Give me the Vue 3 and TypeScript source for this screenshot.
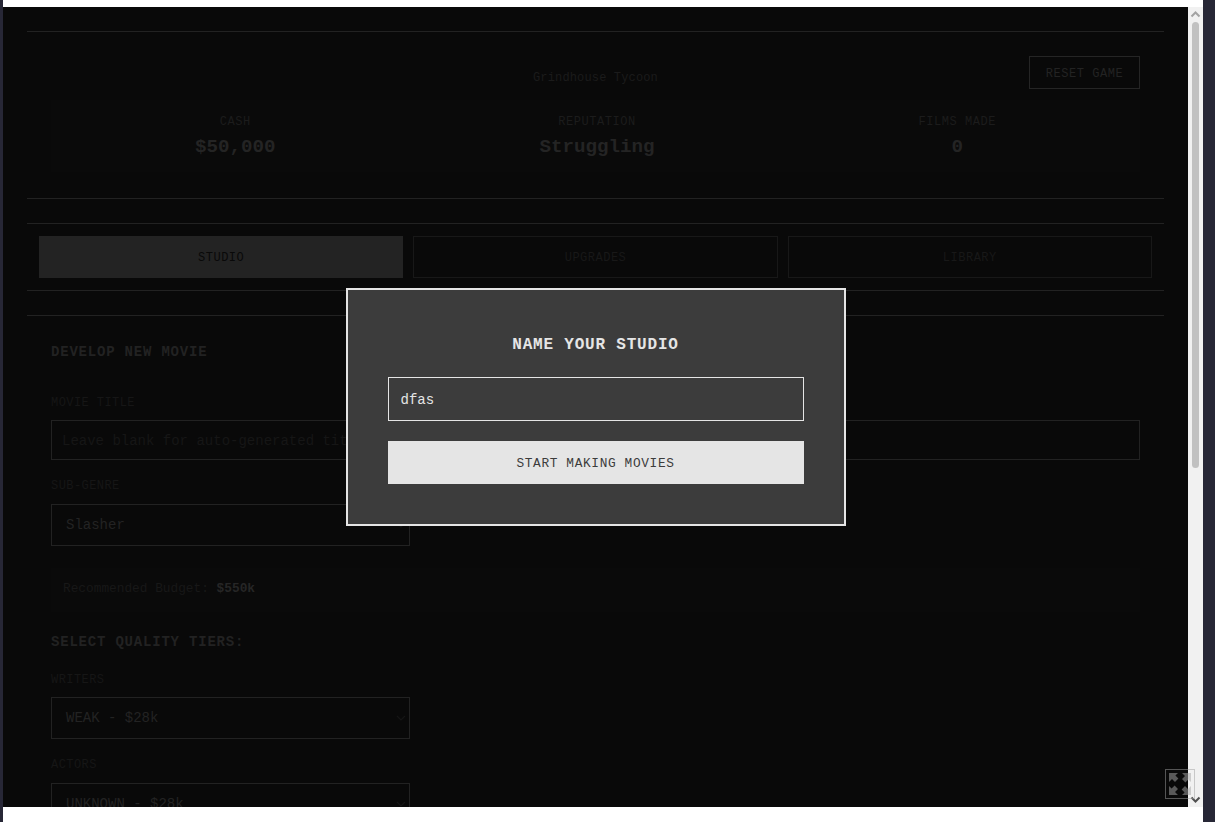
<script setup lang="ts">
import { ref } from 'vue'

const stats = [
  { label: 'CASH', value: '$50,000' },
  { label: 'REPUTATION', value: 'Struggling' },
  { label: 'FILMS MADE', value: '0' },
]
const tabs = ['STUDIO', 'UPGRADES', 'LIBRARY']
const studioName = ref('dfas')
</script>

<template>
  <div class="page">
    <div class="sheet">
      <div class="viewport">
        <div class="scroller">
          <div class="game">
            <header class="band head-band">
              <div class="head-top">
                <span class="game-title">Grindhouse Tycoon</span>
                <button class="reset">RESET GAME</button>
              </div>
              <div class="stats">
                <div v-for="s in stats" :key="s.label" class="stat">
                  <div class="stat-label">{{ s.label }}</div>
                  <div class="stat-value">{{ s.value }}</div>
                </div>
              </div>
            </header>

            <nav class="band tabs">
              <button
                v-for="(t, i) in tabs"
                :key="t"
                class="tab"
                :class="{ active: i === 0 }"
              >{{ t }}</button>
            </nav>

            <section class="band form">
              <h2 class="heading">DEVELOP NEW MOVIE</h2>
              <label class="label first">MOVIE TITLE</label>
              <div class="input">Leave blank for auto-generated titles</div>
              <label class="label second">SUB-GENRE</label>
              <div class="select">
                <span>Slasher</span>
                <svg class="chev" viewBox="0 0 10 6" width="10" height="6"><path d="M1 1l4 4 4-4" fill="none" stroke="currentColor" stroke-width="1.2" /></svg>
              </div>
              <div class="budget">Recommended Budget: <strong>$550k</strong></div>
              <h3 class="heading tiers">SELECT QUALITY TIERS:</h3>
              <label class="label writers">WRITERS</label>
              <div class="select">
                <span>WEAK - $28k</span>
                <svg class="chev" viewBox="0 0 10 6" width="10" height="6"><path d="M1 1l4 4 4-4" fill="none" stroke="currentColor" stroke-width="1.2" /></svg>
              </div>
              <label class="label actors">ACTORS</label>
              <div class="select">
                <span>UNKNOWN - $28k</span>
                <svg class="chev" viewBox="0 0 10 6" width="10" height="6"><path d="M1 1l4 4 4-4" fill="none" stroke="currentColor" stroke-width="1.2" /></svg>
              </div>
            </section>
          </div>

          <div class="overlay">
            <div class="modal">
              <h2 class="modal-title">NAME YOUR STUDIO</h2>
              <input v-model="studioName" class="modal-input" type="text" />
              <button class="modal-btn">START MAKING MOVIES</button>
            </div>
          </div>
        </div>

        <div class="scrollbar">
          <svg class="arrow" viewBox="0 0 15 15" width="15" height="15"><path d="M3.5 9.5L7.5 5.5l4 4" fill="none" stroke="#a3a3a3" stroke-width="2" /></svg>
          <div class="track"><div class="thumb"></div></div>
          <svg class="arrow" viewBox="0 0 15 15" width="15" height="15"><path d="M3.5 5.5l4 4 4-4" fill="none" stroke="#505050" stroke-width="2" /></svg>
        </div>

        <div class="fullscreen">
          <svg viewBox="0 0 28 28" width="28" height="28">
            <g fill="#a8a8a8">
              <path d="M3 3h9l-2.6 2.6 3 3-3.4 3.4-3-3L3 12z" />
              <path d="M25 3v9l-2.6-2.6-3 3-3.4-3.4 3-3L16 3z" />
              <path d="M3 25v-9l2.6 2.6 3-3 3.4 3.4-3 3L12 25z" />
              <path d="M25 25h-9l2.6-2.6-3-3 3.4-3.4 3 3L25 16z" />
            </g>
          </svg>
        </div>
      </div>
    </div>
  </div>
</template>

<style>
html,
body {
  margin: 0;
  background: #272736;
}
</style>

<style scoped>
.page {
  box-sizing: border-box;
  width: 1215px;
  height: 822px;
  padding: 0 12px 0 3px;
  background: #272736;
  overflow: hidden;
  font-family: "Liberation Mono", "DejaVu Sans Mono", monospace;
}
.sheet {
  box-sizing: border-box;
  height: 822px;
  padding: 7px 0 15px;
  background: #fff;
}
.viewport {
  position: relative;
  display: flex;
  height: 800px;
}
.scroller {
  position: relative;
  flex: 1;
  min-width: 0;
  overflow: hidden;
  background: #090909;
}
.game {
  padding: 24px 24px 0;
  color: #222;
}
.band {
  border-top: 1px solid #222;
}
.head-band {
  box-sizing: border-box;
  height: 168px;
  padding: 24px 24px 0;
  border-bottom: 1px solid #222;
  margin-bottom: 24px;
}
.head-top {
  position: relative;
  display: flex;
  justify-content: flex-end;
  height: 33px;
}
.game-title {
  position: absolute;
  left: 0;
  right: 0;
  top: 14px;
  text-align: center;
  font-size: 12px;
  line-height: 16px;
  letter-spacing: 0.15px;
  color: #1b1b1b;
}
.reset {
  box-sizing: border-box;
  width: 111px;
  height: 33px;
  padding: 2px 0 0;
  border: 1px solid #252525;
  background: transparent;
  color: #232323;
  font: 12px "Liberation Mono", monospace;
  letter-spacing: 0.55px;
}
.stats {
  box-sizing: border-box;
  display: flex;
  justify-content: space-around;
  height: 72px;
  margin-top: 11px;
  padding: 0 12px;
  background: #0a0a0a;
}
.stat {
  padding-top: 14px;
  text-align: center;
}
.stat-label {
  font-size: 12px;
  line-height: 16px;
  letter-spacing: 0.55px;
  color: #1c1c1c;
}
.stat-value {
  margin-top: 5px;
  font-size: 19.2px;
  line-height: 24px;
  font-weight: 700;
  color: #242424;
}
.tabs {
  box-sizing: border-box;
  display: flex;
  gap: 10px;
  height: 68px;
  padding: 12px 12px;
  border-bottom: 1px solid #222;
  margin-bottom: 24px;
}
.tab {
  flex: 1;
  height: 42px;
  padding: 2px 0 0;
  border: 1px solid #181818;
  background: transparent;
  color: #181818;
  font: 12px "Liberation Mono", monospace;
  letter-spacing: 0.5px;
}
.tab.active {
  background: #232323;
  border-color: #232323;
  color: #090909;
}
.form {
  padding: 25px 24px 0;
}
.heading {
  margin: 0;
  font-size: 14px;
  line-height: 22px;
  letter-spacing: 0.8px;
  font-weight: 700;
  color: #222;
}
.label {
  display: block;
  font-size: 12px;
  line-height: 14px;
  letter-spacing: 0.43px;
  color: #161616;
}
.label.first {
  margin-top: 33px;
  margin-bottom: 10px;
}
.label.second {
  margin-top: 19px;
  margin-bottom: 11px;
}
.input {
  box-sizing: border-box;
  height: 40px;
  padding: 0 10px;
  border: 1px solid #222;
  font-size: 14px;
  line-height: 40px;
  color: #161616;
}
.select {
  box-sizing: border-box;
  display: flex;
  align-items: center;
  justify-content: space-between;
  width: 359px;
  height: 42px;
  padding: 0 3px 0 14px;
  border: 1px solid #222;
  font-size: 14px;
  color: #232323;
}
.chev {
  color: #151515;
}
.budget {
  box-sizing: border-box;
  height: 44px;
  margin-top: 22px;
  padding: 0 12px;
  background: #0a0a0a;
  font-size: 12.8px;
  line-height: 42px;
  color: #181818;
}
.budget strong {
  color: #262626;
}
.heading.tiers {
  margin-top: 19px;
}
.label.writers {
  margin-top: 20px;
  margin-bottom: 10px;
}
.label.actors {
  margin-top: 19px;
  margin-bottom: 11px;
}
.overlay {
  position: absolute;
  inset: 0;
  display: flex;
  align-items: center;
  justify-content: center;
}
.modal {
  box-sizing: border-box;
  width: 500px;
  height: 238px;
  padding: 43px 40px 40px;
  border: 2px solid #e5e5e5;
  background: #3c3c3c;
}
.modal-title {
  margin: 0 0 20px;
  text-align: center;
  font-size: 16px;
  line-height: 24px;
  letter-spacing: 0.8px;
  font-weight: 700;
  color: #e5e5e5;
}
.modal-input {
  display: block;
  box-sizing: border-box;
  width: 100%;
  height: 44px;
  padding: 2px 12px 0;
  border: 1px solid #e5e5e5;
  border-radius: 0;
  outline: none;
  background: #3c3c3c;
  color: #e5e5e5;
  font: 14px "Liberation Mono", monospace;
}
.modal-btn {
  display: block;
  width: 100%;
  height: 43px;
  margin-top: 20px;
  padding: 2px 0 0;
  border: 0;
  background: #e5e5e5;
  color: #3c3c3c;
  font: 12.8px "Liberation Mono", monospace;
  letter-spacing: 0.64px;
}
.scrollbar {
  display: flex;
  flex-direction: column;
  flex: none;
  width: 15px;
  background: #f1f1f1;
}
.arrow {
  flex: none;
  display: block;
}
.track {
  flex: 1;
  padding: 0 4px 0;
}
.thumb {
  width: 7px;
  height: 446px;
  border-radius: 4px;
  background: #c1c1c1;
}
.fullscreen {
  position: absolute;
  right: 8px;
  bottom: 8px;
  box-sizing: border-box;
  width: 30px;
  height: 30px;
  border: 1px solid #a0a0a0;
  opacity: 0.5;
}
.fullscreen svg {
  display: block;
}
</style>
